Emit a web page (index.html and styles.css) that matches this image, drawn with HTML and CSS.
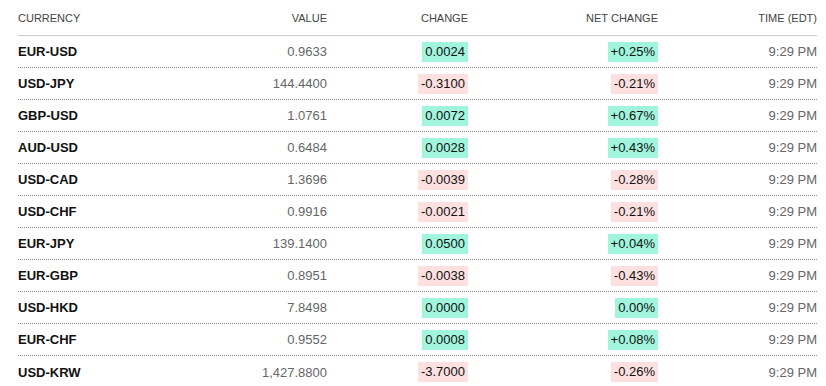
FILE: index.html
```
<!DOCTYPE html>
<html>
<head>
<meta charset="utf-8">
<link rel="stylesheet" href="styles.css">
</head>
<body>
<div class="quotes">
  <div class="row head">
    <div class="c-name">CURRENCY</div>
    <div class="c-num">VALUE</div>
    <div class="c-num">CHANGE</div>
    <div class="c-num">NET CHANGE</div>
    <div class="c-num">TIME (EDT)</div>
  </div>
  <div class="row"><div class="c-name sym">EUR-USD</div><div class="c-num val">0.9633</div><div class="c-num"><span class="badge up">0.0024</span></div><div class="c-num"><span class="badge up">+0.25%</span></div><div class="c-num val">9:29 PM</div></div>
  <div class="row"><div class="c-name sym">USD-JPY</div><div class="c-num val">144.4400</div><div class="c-num"><span class="badge down">-0.3100</span></div><div class="c-num"><span class="badge down">-0.21%</span></div><div class="c-num val">9:29 PM</div></div>
  <div class="row"><div class="c-name sym">GBP-USD</div><div class="c-num val">1.0761</div><div class="c-num"><span class="badge up">0.0072</span></div><div class="c-num"><span class="badge up">+0.67%</span></div><div class="c-num val">9:29 PM</div></div>
  <div class="row"><div class="c-name sym">AUD-USD</div><div class="c-num val">0.6484</div><div class="c-num"><span class="badge up">0.0028</span></div><div class="c-num"><span class="badge up">+0.43%</span></div><div class="c-num val">9:29 PM</div></div>
  <div class="row"><div class="c-name sym">USD-CAD</div><div class="c-num val">1.3696</div><div class="c-num"><span class="badge down">-0.0039</span></div><div class="c-num"><span class="badge down">-0.28%</span></div><div class="c-num val">9:29 PM</div></div>
  <div class="row"><div class="c-name sym">USD-CHF</div><div class="c-num val">0.9916</div><div class="c-num"><span class="badge down">-0.0021</span></div><div class="c-num"><span class="badge down">-0.21%</span></div><div class="c-num val">9:29 PM</div></div>
  <div class="row"><div class="c-name sym">EUR-JPY</div><div class="c-num val">139.1400</div><div class="c-num"><span class="badge up">0.0500</span></div><div class="c-num"><span class="badge up">+0.04%</span></div><div class="c-num val">9:29 PM</div></div>
  <div class="row"><div class="c-name sym">EUR-GBP</div><div class="c-num val">0.8951</div><div class="c-num"><span class="badge down">-0.0038</span></div><div class="c-num"><span class="badge down">-0.43%</span></div><div class="c-num val">9:29 PM</div></div>
  <div class="row"><div class="c-name sym">USD-HKD</div><div class="c-num val">7.8498</div><div class="c-num"><span class="badge up">0.0000</span></div><div class="c-num"><span class="badge up">0.00%</span></div><div class="c-num val">9:29 PM</div></div>
  <div class="row"><div class="c-name sym">EUR-CHF</div><div class="c-num val">0.9552</div><div class="c-num"><span class="badge up">0.0008</span></div><div class="c-num"><span class="badge up">+0.08%</span></div><div class="c-num val">9:29 PM</div></div>
  <div class="row last"><div class="c-name sym">USD-KRW</div><div class="c-num val">1,427.8800</div><div class="c-num"><span class="badge down">-3.7000</span></div><div class="c-num"><span class="badge down">-0.26%</span></div><div class="c-num val">9:29 PM</div></div>
</div>
</body>
</html>
```
FILE: styles.css
```
html, body {
  margin: 0;
  padding: 0;
  background: #fff;
}
body {
  font-family: "Liberation Sans", Arial, Helvetica, sans-serif;
  font-size: 13px;
  color: #111;
}
.quotes {
  width: 799px;
  margin-left: 18px;
}
.row {
  display: grid;
  grid-template-columns: 150px 159px 141px 190px 159px;
  align-items: center;
  height: 32px;
  box-sizing: border-box;
  border-bottom: 1px dotted #8a8a8a;
}
.row.head {
  height: 36px;
  border-bottom: 1px solid #cccccc;
  font-size: 11px;
  color: #444;
}
.row.last {
  border-bottom: none;
}
.c-name {
  text-align: left;
}
.c-num {
  text-align: right;
}
.sym {
  font-weight: bold;
  color: #111;
}
.val {
  color: #666;
}
.badge {
  display: inline-block;
  height: 20px;
  line-height: 20px;
  padding: 0 3px;
  color: #111;
}
.badge.up {
  background: #a0f5dc;
}
.badge.down {
  background: #ffe0e0;
}
```
